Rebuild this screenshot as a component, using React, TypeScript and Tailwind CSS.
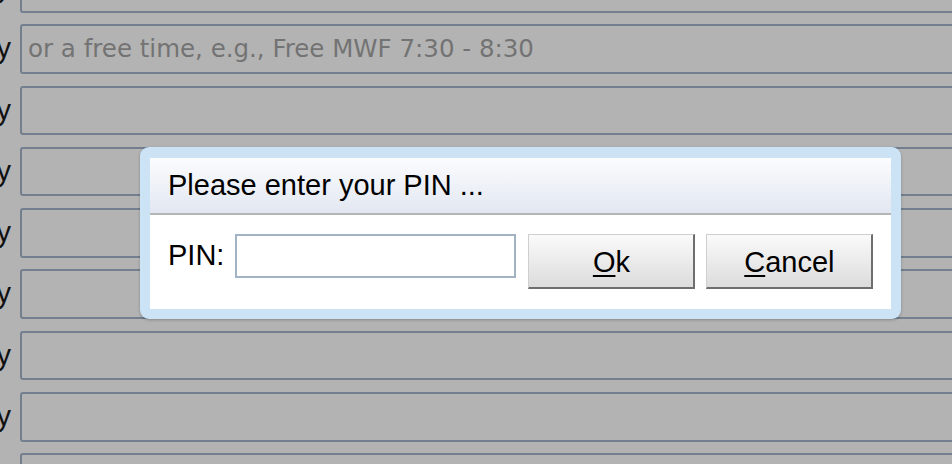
import React, { useState } from 'react';

const days = [
  'Sunday',
  'Monday',
  'Tuesday',
  'Wednesday',
  'Thursday',
  'Friday',
  'Saturday',
  'Sunday',
  'Monday',
];

function ScheduleRow({ day, placeholder }: { day: string; placeholder?: string }) {
  return (
    <div className="flex items-center h-[49.5px] shrink-0">
      <div className="flex shrink-0 justify-end items-center w-[20px] h-full overflow-hidden whitespace-nowrap pr-[9px] text-[29px] text-[#111] font-['Liberation_Sans',Arial,sans-serif]">
        <span className="shrink-0">{day}</span>
      </div>
      <div className="flex items-center h-full w-[1000px] shrink-0 rounded-[3px] border-2 border-[#737e8e] pl-[6px] text-[24.5px] text-[#737373] font-['DejaVu_Sans',Verdana,sans-serif]">
        {placeholder}
      </div>
    </div>
  );
}

function PinDialog() {
  const [pin, setPin] = useState('');

  return (
    <div className="absolute left-[140px] top-[147px] w-[761px] h-[172px] rounded-[9px] bg-[#cce3f6] px-[10px] pt-[11px] pb-[10px] shadow-[0_1px_3px_rgba(0,0,0,0.25)] font-['Liberation_Sans',Arial,sans-serif] text-[29px] text-black">
      <div className="flex flex-col h-full bg-white">
        <header className="flex items-center h-[57px] shrink-0 pl-[18px] pt-[1px] border-b-2 border-[#b5b5b5] bg-gradient-to-b from-[#fbfcfe] to-[#e2e7f1]">
          Please enter your PIN ...
        </header>

        <div className="flex items-start pt-[19px] pl-[18px]">
          <label className="flex items-center h-[44px] mr-[11px]">PIN:</label>
          <input
            type="password"
            value={pin}
            onChange={(e) => setPin(e.target.value)}
            className="w-[281px] h-[44px] border-2 border-[#a3b3c6] bg-white outline-none mr-[12px]"
          />
          <button className="w-[167px] h-[55px] mr-[11px] pt-[3px] border border-[#cfcfcf] border-b-2 border-r-2 border-b-[#6e6e6e] border-r-[#6e6e6e] bg-gradient-to-b from-[#fafafa] to-[#dcdcdc] text-[29px]">
            <span className="underline decoration-2 underline-offset-[3px]">O</span>k
          </button>
          <button className="w-[167px] h-[55px] pt-[3px] border border-[#cfcfcf] border-b-2 border-r-2 border-b-[#6e6e6e] border-r-[#6e6e6e] bg-gradient-to-b from-[#fafafa] to-[#dcdcdc] text-[29px]">
            <span className="underline decoration-2 underline-offset-[3px]">C</span>ancel
          </button>
        </div>
      </div>
    </div>
  );
}

export default function App() {
  return (
    <main className="relative w-[952px] h-[464px] overflow-hidden bg-[#b3b3b3]">
      <section className="flex flex-col gap-[11.8px] mt-[-37px]">
        {days.map((day, i) => (
          <ScheduleRow
            key={i}
            day={day}
            placeholder={i === 1 ? 'or a free time, e.g., Free MWF 7:30 - 8:30' : undefined}
          />
        ))}
      </section>

      <PinDialog />
    </main>
  );
}
